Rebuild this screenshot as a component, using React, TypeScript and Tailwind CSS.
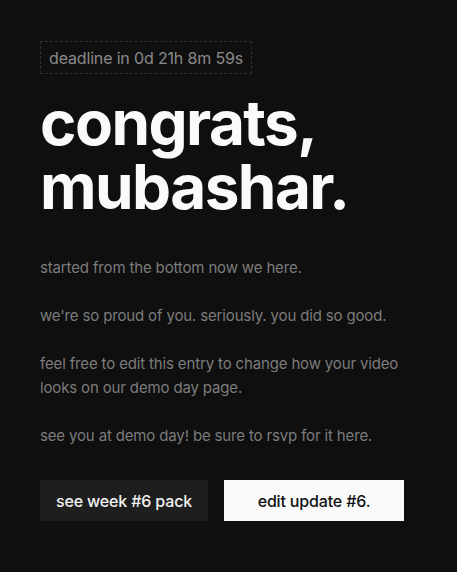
import React from "react"

const paragraphs: string[] = [
  "started from the bottom now we here.",
  "we're so proud of you. seriously. you did so good.",
  "feel free to edit this entry to change how your video looks on our demo day page.",
  "see you at demo day! be sure to rsvp for it here."
]

const App: React.FC = () => {
  return (
    <div className="min-h-screen w-full bg-[#0f0f0f] font-['Inter',sans-serif]">
      <div className="px-10 pt-[41px] pb-10">
        {/* deadline badge */}
        <div className="inline-flex h-[33px] items-center border border-dashed border-[#2e2e2e] px-2 text-[16px] text-[#8a8a8a] tracking-[-0.01em]">
          deadline in 0d 21h 8m 59s
        </div>

        {/* heading */}
        <h1 className="mt-[17px] text-[62px] font-bold leading-[64px] tracking-[-0.025em] text-[#fafafa]">
          congrats,
          <br />
          mubashar.
        </h1>

        {/* message */}
        <div className="mt-[37px] flex flex-col gap-6 text-[15px] leading-6 text-[#7c7c7c] tracking-[-0.01em]">
          {paragraphs.map((p, i) => (
            <p key={i}>{p}</p>
          ))}
        </div>

        {/* actions */}
        <div className="mt-[32px] flex gap-4">
          <button className="h-[41px] w-[168px] bg-[#1e1e1e] text-[16px] font-medium text-[#f2f2f2] tracking-[-0.01em]">
            see week #6 pack
          </button>
          <button className="h-[41px] w-[180px] bg-[#fafafa] text-[16px] font-medium text-[#111111] tracking-[-0.01em]">
            edit update #6.
          </button>
        </div>
      </div>
    </div>
  )
}

export default App
